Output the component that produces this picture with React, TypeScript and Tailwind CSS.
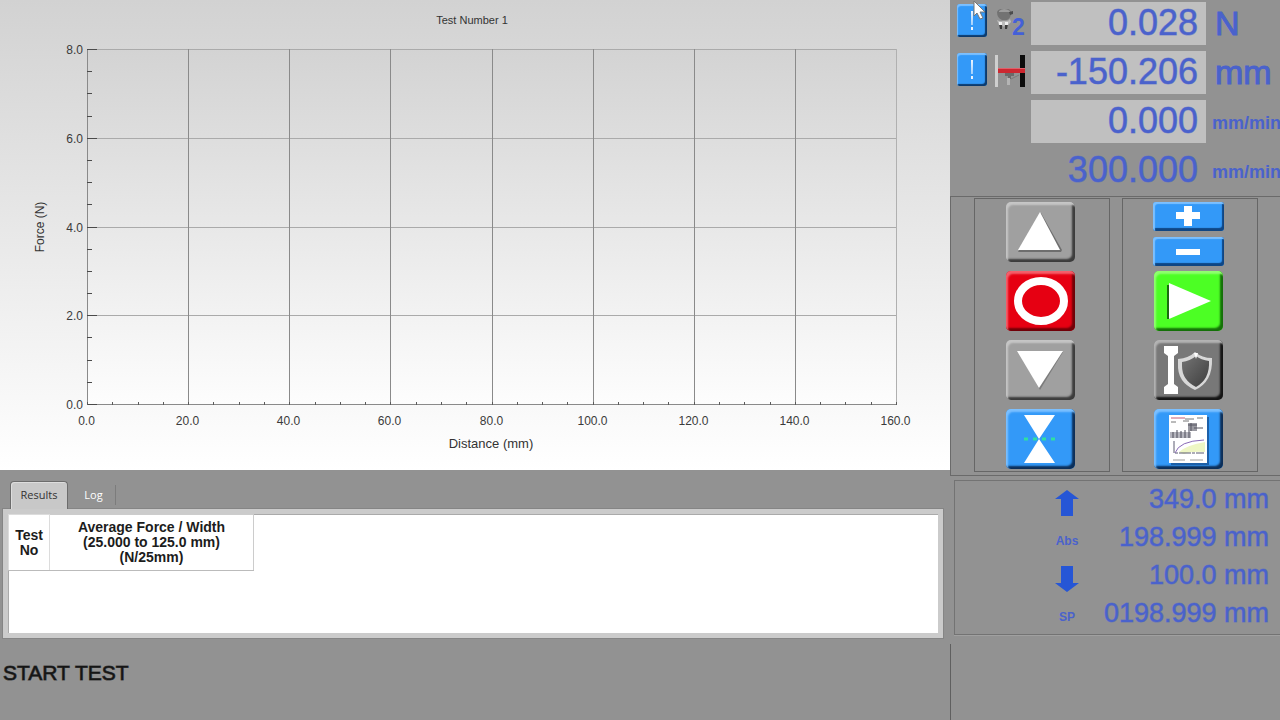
import type { ReactNode } from "react";
import clsx from "clsx";

const PLOT = { left: 87, right: 896, top: 49, bottom: 404 };
const X_TICKS = [0, 20, 40, 60, 80, 100, 120, 140, 160];
const Y_TICKS = [0, 2, 4, 6, 8];

const xPos = (value: number) => Math.round(PLOT.left + (value / 160) * (PLOT.right - PLOT.left)) + 0.5;
const yPos = (value: number) => Math.round(PLOT.bottom - (value / 8) * (PLOT.bottom - PLOT.top)) + 0.5;

function ForceChart() {
  const minorX = Array.from({ length: 33 }, (_, i) => i * 5);
  const minorY = Array.from({ length: 17 }, (_, i) => i * 0.5);

  return (
    <svg
      viewBox="0 0 950 470"
      className="block w-full font-['Liberation_Sans',sans-serif]"
      role="img"
      aria-label="Force against distance"
    >
      <defs>
        <linearGradient id="sheet" x1="0" y1="0" x2="0" y2="1">
          <stop offset="0" stopColor="#d2d2d2" />
          <stop offset="1" stopColor="#ffffff" />
        </linearGradient>
        <linearGradient id="plot" x1="0" y1="0" x2="0" y2="1">
          <stop offset="0" stopColor="#d3d3d3" />
          <stop offset="1" stopColor="#fdfdfd" />
        </linearGradient>
      </defs>
      <rect width="950" height="470" fill="url(#sheet)" />
      <rect x={PLOT.left} y={PLOT.top} width={PLOT.right - PLOT.left} height={PLOT.bottom - PLOT.top} fill="url(#plot)" />

      {Y_TICKS.map((v) => (
        <line key={v} x1={PLOT.left} x2={PLOT.right} y1={yPos(v)} y2={yPos(v)} stroke={v === 0 ? "#8a8a8a" : "#aaaaaa"} />
      ))}
      {X_TICKS.map((v) => (
        <line key={v} x1={xPos(v)} x2={xPos(v)} y1={PLOT.top} y2={PLOT.bottom} stroke={v === 160 ? "#b0b0b0" : "#8a8a8a"} />
      ))}
      {minorY.map((v) => (
        <line key={v} x1={PLOT.left} x2={PLOT.left + (v % 2 === 0 ? 10 : 5)} y1={yPos(v)} y2={yPos(v)} stroke="#4a4a4a" />
      ))}
      {minorX.map((v) => (
        <line key={v} x1={xPos(v)} x2={xPos(v)} y1={PLOT.bottom - 2} y2={PLOT.bottom + 1} stroke="#5a5a5a" />
      ))}

      <g fill="#3a3a3a" fontSize="12">
        {Y_TICKS.map((v) => (
          <text key={v} x="83" y={yPos(v) + 4} textAnchor="end">
            {v.toFixed(1)}
          </text>
        ))}
        {X_TICKS.map((v) => (
          <text key={v} x={xPos(v) - 1} y="425" textAnchor="middle">
            {v.toFixed(1)}
          </text>
        ))}
      </g>
      <text x="472" y="24" textAnchor="middle" fontSize="11" fill="#333333">
        Test Number 1
      </text>
      <text x="491" y="448" textAnchor="middle" fontSize="13" fill="#333333">
        Distance (mm)
      </text>
      <text transform="translate(44 227) rotate(-90)" textAnchor="middle" fontSize="12" fill="#333333">
        Force (N)
      </text>
    </svg>
  );
}

function ResultsPane() {
  return (
    <section className="pt-[11px] pr-[7px] pl-[3px]">
      <div role="tablist" className="flex h-7 items-stretch pl-[7px] font-['Open_Sans',sans-serif] text-[11px]">
        <button
          role="tab"
          aria-selected="true"
          className="w-[58px] rounded-t-[4px] border border-b-0 border-[#6c6c6c] bg-[#c8c8c8] text-[#333333] shadow-[inset_1px_1px_0_#dddddd]"
        >
          Results
        </button>
        <button role="tab" aria-selected="false" className="my-1 ml-1 w-11 border-r border-[#7c7c7c] text-white">
          Log
        </button>
      </div>
      <div
        role="tabpanel"
        className="h-[129px] border-[5px] border-[#cbcbcb] bg-white shadow-[inset_1px_1px_0_#aaaaaa,0_0_0_1px_#858585]"
      >
        <table className="border-collapse text-[14px] leading-[15px] font-bold text-[#1c1c1c]">
          <thead>
            <tr className="h-14">
              <th className="w-[41px] border border-[#dcdcdc] border-b-[#bbbbbb]">Test No</th>
              <th className="w-[204px] border border-[#cccccc] border-b-[#bbbbbb] border-l-[#e4e4e4] whitespace-nowrap">
                Average Force / Width
                <br />
                (25.000 to 125.0 mm)
                <br />
                (N/25mm)
              </th>
            </tr>
          </thead>
        </table>
      </div>
    </section>
  );
}

function AlertButton({ label }: { label: string }) {
  return (
    <button
      aria-label={label}
      className="flex h-[33px] w-[30px] items-center justify-center rounded-[3px] bg-[#3399f8] shadow-[inset_1px_2px_1px_#7cc0ff,inset_-2px_-2px_1px_#0d3a6c]"
    >
      <svg viewBox="0 0 6 22" className="h-[22px] w-[6px]" fill="#eaf4ff">
        <path d="M2 1h2l-.4 14H2.4z" />
        <rect x="2" y="17" width="2" height="3" />
      </svg>
    </button>
  );
}

function LoadCellIcon() {
  return (
    <svg viewBox="0 0 34 36" className="h-9 w-[34px] overflow-visible">
      <path d="M4 8q1-3 5-3h5q4 0 4 4 0 5-4 7H9q-5-2-5-8z" fill="#727272" />
      <path d="M6 7q5-4 11 0v1H6z" fill="#9c9c9c" />
      <path d="M16 8l4-1v3l-3 1z" fill="#4c4c4c" />
      <path d="M4 16q3 2 6 1h3q3 0 4-2l1 3-3 3h-3l-1 2-2-2H6z" fill="#bdbdbd" />
      <path d="M6 20h3v5H7zM12 20h3l-1 5h-2z" fill="#3c3c3c" />
      <path d="M6 18h3v3H6zM12 18h3v3h-3z" fill="#f0f0f0" />
      <text x="19" y="31" fontSize="23" fontWeight="bold" fill="#4460d8">
        2
      </text>
    </svg>
  );
}

function CrossheadIcon() {
  return (
    <svg viewBox="0 0 34 36" className="h-9 w-[34px]">
      <rect x="2" y="2" width="3" height="32" fill="#cfcfcf" />
      <rect x="27" y="2" width="5" height="32" fill="#0c0c0c" />
      <rect x="5" y="15" width="27" height="5" fill="#cc2730" />
      <rect x="5" y="15" width="27" height="1" fill="#e0606a" />
      <path d="M12 20h9v3h-3v3h-3v-3h-3z" fill="#6a6a6a" />
      <path d="M14 25h3v7h-3z" fill="#b4b4b4" />
      <path d="M18 26l8-4" stroke="#7a7a7a" fill="none" />
    </svg>
  );
}

interface ReadoutProps {
  value: string;
  unit: string;
  name: string;
  boxed?: boolean;
  smallUnit?: boolean;
  children?: ReactNode;
}

function Readout({ value, unit, name, boxed = true, smallUnit, children }: ReadoutProps) {
  return (
    <div className="flex h-[43px] items-stretch text-[#4a62cc]">
      <div className="flex w-20 shrink-0 items-start gap-[6px] pt-[2px] pl-[6px]">{children}</div>
      <output
        aria-label={name}
        className={clsx(
          "w-[175px] shrink-0 pr-2 text-right text-[36px] leading-[42px] [-webkit-text-stroke:1px_#4a62cc88]",
          boxed && "bg-[#c0c0c0]",
        )}
      >
        {value}
      </output>
      <span
        className={clsx(
          smallUnit
            ? "pl-[6px] text-[18px] leading-[46px] font-bold"
            : "pl-[9px] text-[34px] leading-[42px] [-webkit-text-stroke:1px]",
        )}
      >
        {unit}
      </span>
    </div>
  );
}

const PAD_TONES = {
  grey: "bg-[#a0a0a0] shadow-[inset_2px_3px_2px_#c6c6c6,inset_-3px_-3px_2px_#3c3c3c]",
  dark: "bg-[#787878] shadow-[inset_2px_3px_2px_#b4b4b4,inset_-3px_-3px_2px_#151515]",
  red: "bg-[#e60012] shadow-[inset_2px_3px_2px_#f4606c,inset_-3px_-3px_2px_#700008]",
  green: "bg-[#4cff24] shadow-[inset_2px_3px_2px_#90ff70,inset_-3px_-3px_2px_#147008]",
  blue: "bg-[#3399f8] shadow-[inset_2px_3px_2px_#7cc0ff,inset_-3px_-3px_2px_#0c2e58]",
};

function PadButton({ label, tone, children }: { label: string; tone: keyof typeof PAD_TONES; children: ReactNode }) {
  return (
    <button aria-label={label} className={clsx("h-[60px] w-[69px] rounded-[5px]", PAD_TONES[tone])}>
      <svg viewBox="0 0 69 60" className="h-full w-full" fill="#ffffff">
        {children}
      </svg>
    </button>
  );
}

function StepButton({ label, children }: { label: string; children: ReactNode }) {
  return (
    <button
      aria-label={label}
      className="h-[29px] w-[71px] rounded-[3px] bg-[#3399f8] shadow-[inset_2px_2px_1px_#7cc0ff,inset_-2px_-3px_1px_#0f4684]"
    >
      <svg viewBox="0 0 71 29" className="h-full w-full" fill="#ffffff">
        {children}
      </svg>
    </button>
  );
}

function ControlPad() {
  const column = "flex w-[136px] flex-col items-center gap-[9px] border border-[#666666] pt-[3px] pr-1 pb-[2px]";
  return (
    <div className="flex gap-3 border-t border-b border-l border-[#6a6a6a] pt-px pb-[3px] pl-[23px]">
      <div className={column}>
        <PadButton label="Move up" tone="grey">
          <path d="M12 50L55 50 56 48 35 11z" fill="#6e6e6e" />
          <path d="M34 10L12 48h42z" />
        </PadButton>
        <PadButton label="Stop" tone="red">
          <ellipse cx="35" cy="30" rx="23" ry="20" fill="none" stroke="#ffffff" strokeWidth="8" />
        </PadButton>
        <PadButton label="Move down" tone="grey">
          <path d="M13 12L34 50 57 12z" fill="#7c7c7c" />
          <path d="M11 11h46L33 48z" />
        </PadButton>
        <PadButton label="Return to zero" tone="blue">
          <path d="M18 6h31L33 30 49 54H18L33 30z" />
          <path d="M18 30h33" stroke="#2fe0a0" strokeWidth="3" strokeDasharray="4 5" />
        </PadButton>
      </div>
      <div className={column}>
        <div className="-mb-1 flex flex-col gap-[6px]">
          <StepButton label="Increase speed">
            <path d="M31 4h8v6h8v7h-8v7h-8v-7h-8v-7h8z" />
          </StepButton>
          <StepButton label="Decrease speed">
            <path d="M23 12h24v6H23z" />
          </StepButton>
        </div>
        <PadButton label="Start test" tone="green">
          <path d="M13 14h3v34h-3z" fill="#1c6a10" />
          <path d="M15 12L57 30 15 48z" />
        </PadButton>
        <PadButton label="Specimen protect" tone="dark">
          <defs>
            <linearGradient id="shield" x1="0" y1="0" x2="1" y2="1">
              <stop offset="0" stopColor="#747474" />
              <stop offset="1" stopColor="#3e3e3e" />
            </linearGradient>
          </defs>
          <path d="M10 6h14v7l-4 3v28l4 3v7H10v-7l4-3V16l-4-3z" />
          <path d="M41 12q-6 6-17 7v5q-1 18 17 26 18-8 17-32-10 0-17-6z" fill="#d8d8d8" />
          <path d="M42 16q-6 5-14 6v4q0 14 14 21 14-8 13-26-8-1-13-5z" fill="url(#shield)" />
          <path d="M40 13h4l-2 6z" fill="#ffffff" />
        </PadButton>
        <PadButton label="Print report" tone="blue">
          <rect x="17" y="8" width="38" height="48" fill="#1d60a8" />
          <rect x="15" y="6" width="38" height="48" />
          <path d="M17 9h14" stroke="#c65a74" />
          <path d="M31 10h9M43 9h6M17 13h5M29 12h6" stroke="#777777" />
          <path d="M34 14h9v8h-9z" fill="#9a9aa2" />
          <path d="M34 16h9M37 14v8M40 19h9" stroke="#555560" />
          <path d="M16 23h21v6H16z" fill="#b4b4bc" />
          <path d="M19 23v6M23 21v8M27 22v7M31 21v8M35 22v7" stroke="#4c4c58" />
          <path d="M25 43q8-7 26-10v10q-14-1-21 2z" fill="#eef6c4" />
          <path d="M20 32v12h30" fill="none" stroke="#5a5a70" strokeDasharray="12 1 3 1" />
          <path d="M21 44q4-12 29-13" fill="none" stroke="#8a6ab8" />
          <path d="M19 51h12M36 51h13" stroke="#9a9a9a" />
        </PadButton>
      </div>
    </div>
  );
}

function ArrowIcon({ down }: { down?: boolean }) {
  return (
    <svg viewBox="0 0 24 26" className="h-[26px] w-6" fill="#2656d6">
      <path d={down ? "M6 0h12v17h6L12 26 0 17h6z" : "M12 0l12 9h-6v17H6V9H0z"} />
    </svg>
  );
}

const LIMITS = [
  { id: "upper", marker: <ArrowIcon />, value: "349.0 mm" },
  { id: "absolute", marker: "Abs", value: "198.999 mm" },
  { id: "lower", marker: <ArrowIcon down />, value: "100.0 mm" },
  { id: "setpoint", marker: "SP", value: "0198.999 mm" },
];

function LimitsPanel() {
  return (
    <dl className="mt-1 ml-1 border border-r-0 border-[#737373] pr-[11px] pb-px text-[#4a62cc] shadow-[0_1px_0_#a0a0a0]">
      {LIMITS.map((limit) => (
        <div key={limit.id} className="flex h-[38px] items-start justify-between pl-[100px]">
          <dt className="flex h-full w-6 items-center justify-center pt-[6px] text-[12px] font-bold">{limit.marker}</dt>
          <dd className="text-[27px] leading-9 whitespace-nowrap [-webkit-text-stroke:1px_#4a62cc88]">{limit.value}</dd>
        </div>
      ))}
    </dl>
  );
}

function Cursor() {
  return (
    <svg viewBox="0 0 14 20" className="absolute top-0 left-[22px] h-5 w-[14px]">
      <path d="M2 1v15l3-3 3 6 3-1-3-6h5z" fill="#ffffff" stroke="#777777" />
    </svg>
  );
}

export default function App() {
  return (
    <main className="flex min-h-screen overflow-hidden bg-[#929292] font-['Liberation_Sans',Arial,sans-serif]">
      <div className="flex min-w-0 flex-1 flex-col">
        <ForceChart />
        <ResultsPane />
        <footer className="pt-[21px] pl-[3px] text-[21px] leading-7 text-[#151515] [-webkit-text-stroke:1px_#151515aa]">
          START TEST
        </footer>
      </div>

      <aside className="relative flex w-[330px] shrink-0 flex-col">
        <div className="flex flex-col gap-[6px] overflow-hidden pt-[2px] pb-1 pl-px">
          <Readout name="Force" value="0.028" unit="N">
            <AlertButton label="Zero force" />
            <LoadCellIcon />
          </Readout>
          <Readout name="Extension" value="-150.206" unit="mm">
            <AlertButton label="Zero extension" />
            <CrossheadIcon />
          </Readout>
          <Readout name="Current speed" value="0.000" unit="mm/min" smallUnit />
          <Readout name="Set speed" value="300.000" unit="mm/min" smallUnit boxed={false} />
        </div>
        <ControlPad />
        <LimitsPanel />
        <div className="mt-[9px] flex-1 border-l border-[#5f5f5f]" />
        <Cursor />
      </aside>
    </main>
  );
}
